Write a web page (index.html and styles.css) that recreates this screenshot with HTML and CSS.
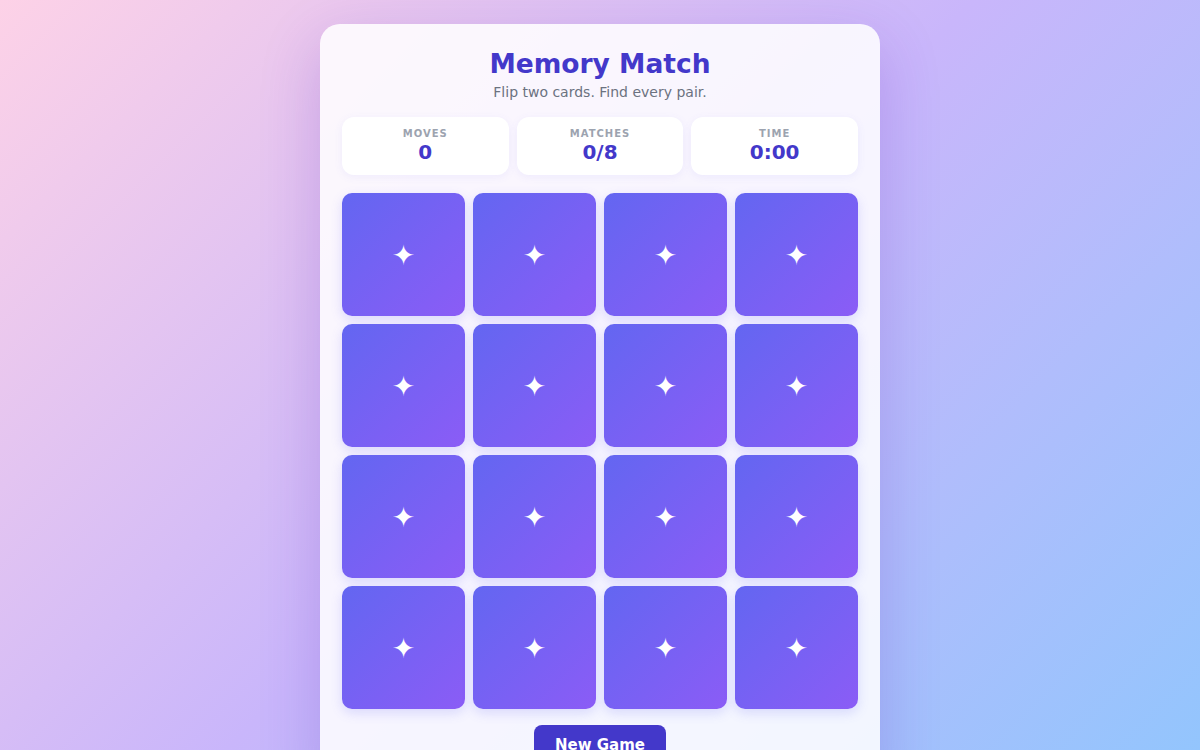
FILE: index.html
```html
<!DOCTYPE html>
<html lang="en">
<head>
    <meta charset="UTF-8">
    <meta name="viewport" content="width=device-width, initial-scale=1.0">
    <title>Memory Match</title>
    <link rel="stylesheet" href="styles.css">
</head>
<body>
    <div class="game">
        <h1 class="title">Memory Match</h1>
        <p class="subtitle">Flip two cards. Find every pair.</p>

        <div class="stats">
            <div class="stat">
                <span class="stat-label">Moves</span>
                <span class="stat-value">0</span>
            </div>
            <div class="stat">
                <span class="stat-label">Matches</span>
                <span class="stat-value">0/8</span>
            </div>
            <div class="stat">
                <span class="stat-label">Time</span>
                <span class="stat-value">0:00</span>
            </div>
        </div>

        <div class="board">
            <div class="tile">✦</div>
            <div class="tile">✦</div>
            <div class="tile">✦</div>
            <div class="tile">✦</div>
            <div class="tile">✦</div>
            <div class="tile">✦</div>
            <div class="tile">✦</div>
            <div class="tile">✦</div>
            <div class="tile">✦</div>
            <div class="tile">✦</div>
            <div class="tile">✦</div>
            <div class="tile">✦</div>
            <div class="tile">✦</div>
            <div class="tile">✦</div>
            <div class="tile">✦</div>
            <div class="tile">✦</div>
        </div>

        <div class="actions">
            <button class="new-game">New Game</button>
        </div>
    </div>
</body>
</html>
```

FILE: styles.css
```css
* {
    box-sizing: border-box;
}
html, body {
    height: 100%;
}
body {
    margin: 0;
    padding-top: 24px;
    font-family: "DejaVu Sans", "Noto Sans", sans-serif;
    background: linear-gradient(135deg, #fdd2e7 0%, #c9b6fb 50%, #93c5fd 100%);
    overflow: hidden;
}
.game {
    width: 560px;
    margin: 0 auto;
    padding: 24px 22px 24px;
    background: rgba(255, 255, 255, 0.86);
    border-radius: 20px;
    box-shadow: 0 20px 60px rgba(91, 33, 182, 0.22);
    text-align: center;
}
.title {
    margin: 0;
    font-size: 26.5px;
    line-height: 32px;
    font-weight: bold;
    color: #4338ca;
}
.subtitle {
    margin: 2px 0 0;
    font-size: 14px;
    line-height: 20px;
    color: #6b7280;
}
.stats {
    margin-top: 15px;
    display: grid;
    grid-template-columns: repeat(3, 1fr);
    gap: 8px;
}
.stat {
    height: 58px;
    background: white;
    border-radius: 12px;
    box-shadow: 0 2px 8px rgba(99, 102, 241, 0.08);
    display: flex;
    flex-direction: column;
    align-items: center;
    padding-top: 10px;
}
.stat-label {
    font-size: 10px;
    line-height: 13px;
    font-weight: bold;
    letter-spacing: 1px;
    text-transform: uppercase;
    color: #9ca3af;
}
.stat-value {
    font-size: 20px;
    line-height: 25px;
    font-weight: bold;
    color: #4338ca;
}
.board {
    margin-top: 18px;
    display: grid;
    grid-template-columns: repeat(4, 1fr);
    gap: 8px;
}
.tile {
    height: 123px;
    padding-top: 2px;
    border-radius: 10px;
    background: linear-gradient(135deg, #6366f1, #8b5cf6);
    box-shadow: 0 4px 12px rgba(99, 102, 241, 0.2);
    color: white;
    font-size: 28px;
    display: flex;
    align-items: center;
    justify-content: center;
    cursor: pointer;
}
.actions {
    margin-top: 16px;
}
.new-game {
    background: #4338ca;
    color: white;
    border: none;
    border-radius: 8px;
    padding: 11px 21px;
    font-family: inherit;
    font-size: 15px;
    font-weight: bold;
    cursor: pointer;
}
```
